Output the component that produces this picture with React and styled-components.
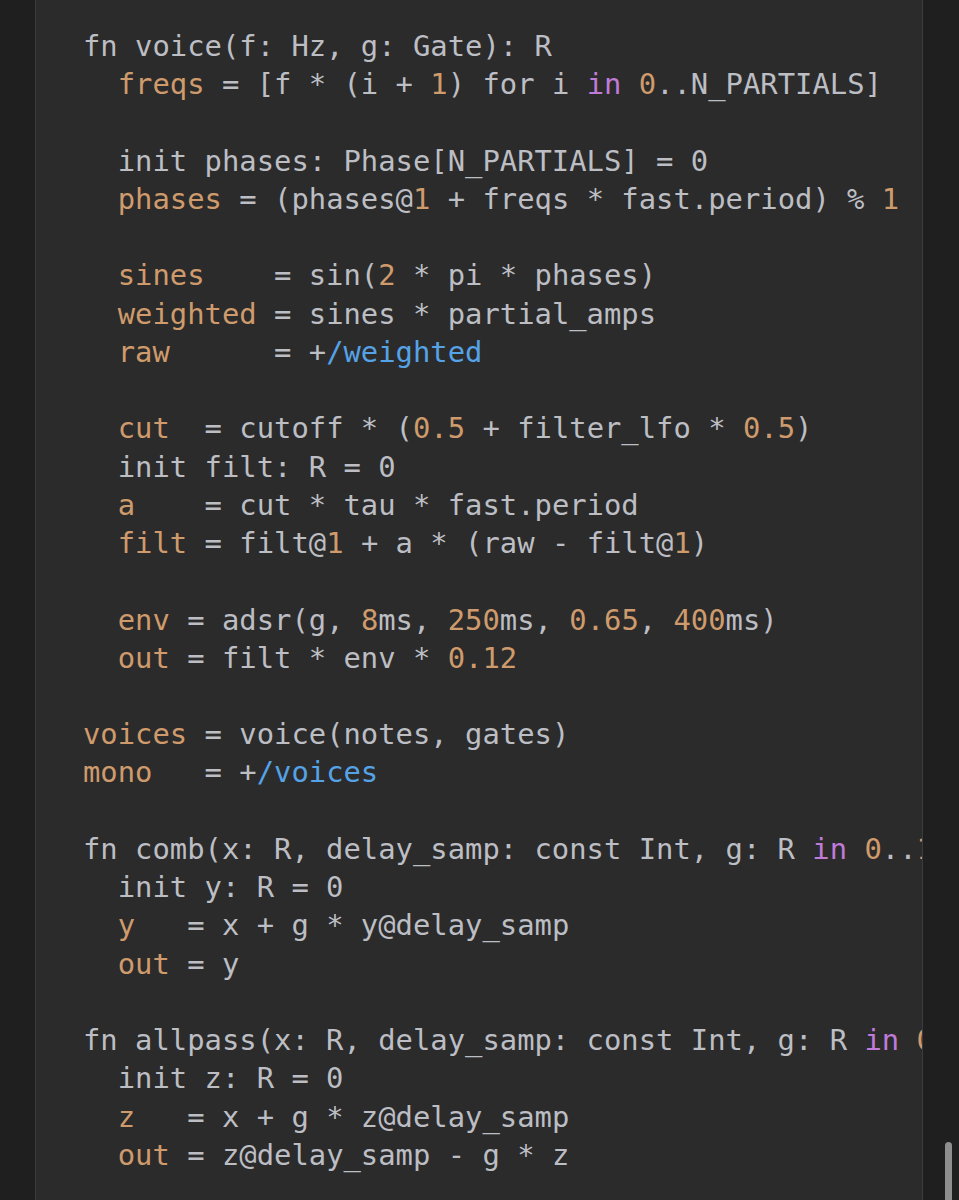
import React from 'react';
import styled, { createGlobalStyle } from 'styled-components';

const GlobalStyle = createGlobalStyle`
  html, body {
    margin: 0;
    padding: 0;
    background: #1e1f1f;
  }
`;

const Screen = styled.div`
  display: flex;
  width: 959px;
  height: 1200px;
  overflow: hidden;
  background: #1e1f1f;
`;

const SidePane = styled.div`
  flex: 0 0 ${(p) => p.width}px;
  position: relative;
  background: #1f1f1f;
`;

const Editor = styled.div`
  flex: 0 0 888px;
  box-sizing: border-box;
  border-left: 1px solid #3a3b3c;
  border-right: 1px solid #3a3b3c;
  background: #2b2b2b;
  padding: 27px 0 0 47px;
  overflow: hidden;
`;

const Code = styled.pre`
  margin: 0;
  font-family: 'DejaVu Sans Mono', 'Liberation Mono', monospace;
  font-size: 28.85px;
  line-height: 38.24px;
  color: #bcbec4;
  white-space: pre;
`;

const Line = styled.div`
  height: 38.24px;
`;

const COLORS = {
  t: '#bcbec4',
  v: '#cf9b6c',
  n: '#cf9b6c',
  b: '#56a2e6',
  k: '#c07ad8',
};

const Token = styled.span`
  color: ${(p) => COLORS[p.kind]};
`;

const ScrollThumb = styled.div`
  position: absolute;
  left: 22px;
  top: 1142px;
  width: 7px;
  height: 70px;
  border-radius: 4px;
  background: #8e8e8e;
`;

const t = (s) => ['t', s];
const v = (s) => ['v', s];
const n = (s) => ['n', s];
const b = (s) => ['b', s];
const k = (s) => ['k', s];

const lines = [
  [t('fn voice(f: Hz, g: Gate): R')],
  [t('  '), v('freqs'), t(' = [f * (i + '), n('1'), t(') for i '), k('in'), t(' '), n('0'), t('..N_PARTIALS]')],
  [],
  [t('  init phases: Phase[N_PARTIALS] = 0')],
  [t('  '), v('phases'), t(' = (phases@'), n('1'), t(' + freqs * fast.period) % '), n('1')],
  [],
  [t('  '), v('sines'), t('    = sin('), n('2'), t(' * pi * phases)')],
  [t('  '), v('weighted'), t(' = sines * partial_amps')],
  [t('  '), v('raw'), t('      = +'), b('/weighted')],
  [],
  [t('  '), v('cut'), t('  = cutoff * ('), n('0.5'), t(' + filter_lfo * '), n('0.5'), t(')')],
  [t('  init filt: R = 0')],
  [t('  '), v('a'), t('    = cut * tau * fast.period')],
  [t('  '), v('filt'), t(' = filt@'), n('1'), t(' + a * (raw - filt@'), n('1'), t(')')],
  [],
  [t('  '), v('env'), t(' = adsr(g, '), n('8'), t('ms, '), n('250'), t('ms, '), n('0.65'), t(', '), n('400'), t('ms)')],
  [t('  '), v('out'), t(' = filt * env * '), n('0.12')],
  [],
  [v('voices'), t(' = voice(notes, gates)')],
  [v('mono'), t('   = +'), b('/voices')],
  [],
  [t('fn comb(x: R, delay_samp: const Int, g: R '), k('in'), t(' '), n('0'), t('..'), n('1'), t('): R')],
  [t('  init y: R = 0')],
  [t('  '), v('y'), t('   = x + g * y@delay_samp')],
  [t('  '), v('out'), t(' = y')],
  [],
  [t('fn allpass(x: R, delay_samp: const Int, g: R '), k('in'), t(' '), n('0'), t('..'), n('1'), t('): R')],
  [t('  init z: R = 0')],
  [t('  '), v('z'), t('   = x + g * z@delay_samp')],
  [t('  '), v('out'), t(' = z@delay_samp - g * z')],
];

const App = () => (
  <>
    <GlobalStyle />
    <Screen>
      <SidePane width={35} />
      <Editor>
        <Code>
          {lines.map((tokens, i) => (
            <Line key={i}>
              {tokens.map(([kind, text], j) => (
                <Token key={j} kind={kind}>
                  {text}
                </Token>
              ))}
            </Line>
          ))}
        </Code>
      </Editor>
      <SidePane width={36}>
        <ScrollThumb />
      </SidePane>
    </Screen>
  </>
);

export default App;
